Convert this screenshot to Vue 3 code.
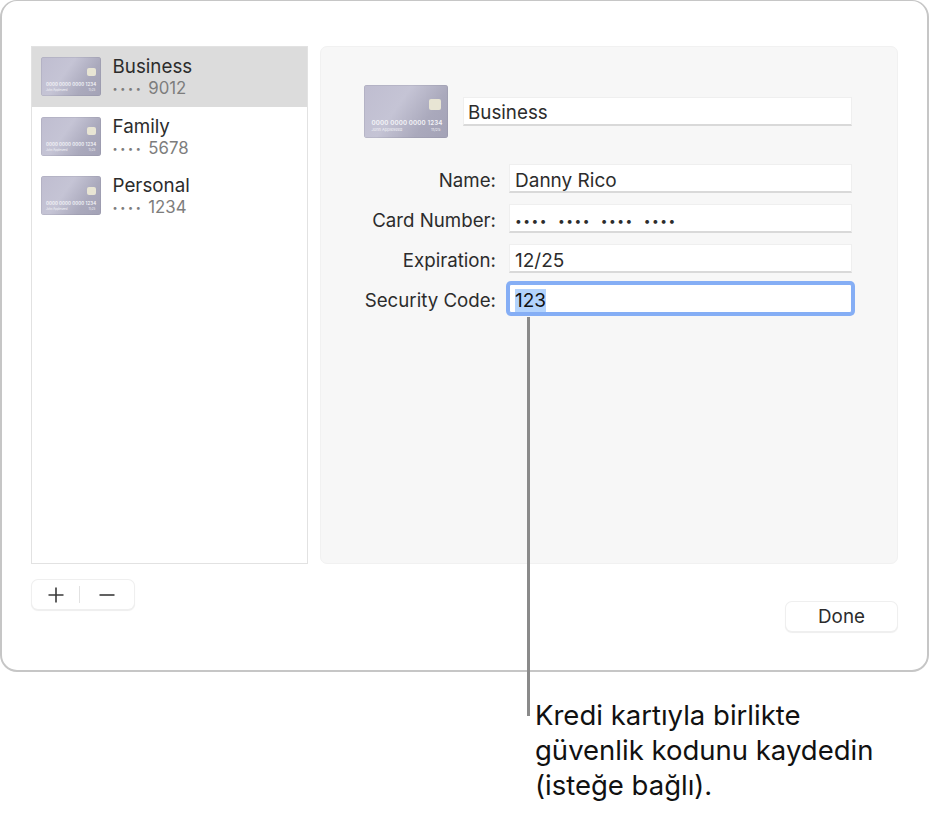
<script setup>
import { ref } from 'vue'

const cards = ref([
  { id: 'business', name: 'Business', last: '9012', selected: true },
  { id: 'family', name: 'Family', last: '5678', selected: false },
  { id: 'personal', name: 'Personal', last: '1234', selected: false },
])

const fields = ref([
  { label: 'Name:', value: 'Danny Rico' },
  { label: 'Card Number:', value: '•••• •••• •••• ••••', dots: true },
  { label: 'Expiration:', value: '12/25' },
  { label: 'Security Code:', value: '123', focused: true },
])
</script>

<template>
  <div class="page">
    <div class="window">
      <div class="panes">
        <ul class="card-list">
          <li
            v-for="card in cards"
            :key="card.id"
            class="card-row"
            :class="{ selected: card.selected }"
          >
            <div class="card-art small">
              <span class="chip"></span>
              <span class="art-number">0000 0000 0000 1234</span>
              <span class="art-meta"><span>John Appleseed</span><span>11/25</span></span>
            </div>
            <div class="card-text">
              <span class="card-name">{{ card.name }}</span>
              <span class="card-last"><span class="mini-dots">••••</span> {{ card.last }}</span>
            </div>
          </li>
        </ul>

        <div class="detail">
          <div class="title-row">
            <div class="card-art large">
              <span class="chip"></span>
              <span class="art-number">0000 0000 0000 1234</span>
              <span class="art-meta"><span>John Appleseed</span><span>11/25</span></span>
            </div>
            <div class="input title-input">Business</div>
          </div>

          <div class="form">
            <template v-for="field in fields" :key="field.label">
              <label class="field-label">{{ field.label }}</label>
              <div class="input form-input" :class="{ focused: field.focused, dots: field.dots }">
                <span :class="{ highlight: field.focused }">{{ field.value }}</span>
              </div>
            </template>
          </div>
        </div>
      </div>

      <div class="footer">
        <div class="add-remove">
          <button class="icon-btn add" aria-label="Add">
            <svg width="16" height="16" viewBox="0 0 16 16">
              <path d="M8 0.5V15.5M0.5 8H15.5" stroke="#3a3a3a" stroke-width="1.6" fill="none" />
            </svg>
          </button>
          <span class="divider"></span>
          <button class="icon-btn remove" aria-label="Remove">
            <svg width="16" height="16" viewBox="0 0 16 16">
              <path d="M0.5 8H15.5" stroke="#3a3a3a" stroke-width="1.6" fill="none" />
            </svg>
          </button>
        </div>
        <button class="done">Done</button>
      </div>
    </div>

    <div class="callout">Kredi kartıyla birlikte<br />güvenlik kodunu kaydedin<br />(isteğe bağlı).</div>
    <div class="leader"></div>
  </div>
</template>

<style>
html,
body {
  margin: 0;
  background: #fff;
}
</style>

<style scoped>
.page {
  position: relative;
  width: 931px;
  height: 814px;
  overflow: hidden;
  font-family: Inter, "Liberation Sans", sans-serif;
  background: #fff;
}

.window {
  box-sizing: border-box;
  width: 929px;
  height: 672px;
  padding: 45px 29px 0 29px;
  background: #fff;
  border: 2px solid #c6c6c6;
  border-top-width: 1px;
  border-radius: 17px;
}

.panes {
  display: flex;
  gap: 12px;
  height: 518px;
}

.card-list {
  box-sizing: border-box;
  width: 277px;
  margin: 0;
  padding: 0;
  list-style: none;
  border: 1.5px solid #e2e2e2;
}

.card-row {
  display: flex;
  align-items: center;
  gap: 12px;
  box-sizing: border-box;
  height: 59.5px;
  padding: 0 0 0 8.5px;
}

.card-row.selected {
  background: #dcdcdc;
}

.card-text {
  display: flex;
  flex-direction: column;
  padding-top: 2px;
}

.card-name {
  font-size: 18.8px;
  line-height: 22px;
  color: #2c2c2c;
}

.card-last {
  font-size: 16.8px;
  line-height: 20px;
  color: #7d7d7d;
}

.mini-dots {
  font-size: 9px;
  letter-spacing: 2.7px;
  vertical-align: 2px;
}

.card-art {
  position: relative;
  flex: none;
  box-sizing: border-box;
  overflow: hidden;
  color: #f4f4f8;
  background: linear-gradient(125deg, #bfbdd0 0%, #c5c4d5 40%, #aaa9bc 72%, #a3a2b6 100%);
  border-radius: 3px;
  box-shadow: inset 0 0 0 0.5px rgba(120, 120, 140, 0.35);
}

.card-art.small {
  width: 60px;
  height: 39px;
}

.card-art.large {
  width: 84px;
  height: 53px;
}

.chip {
  position: absolute;
  top: 27%;
  right: 8.3%;
  width: 14.6%;
  height: 20%;
  background: #e8e5d4;
  border-radius: 2px;
}

.art-number,
.art-meta {
  position: absolute;
  left: 9%;
  right: 9%;
  white-space: nowrap;
}

.art-number {
  top: 64%;
  font-weight: 600;
}

.art-meta {
  top: 79%;
  display: flex;
  justify-content: space-between;
}

.small .art-number {
  font-size: 4.4px;
  line-height: 6px;
  letter-spacing: 0.1px;
}

.small .art-meta {
  font-size: 2.8px;
  line-height: 4px;
}

.large .art-number {
  font-size: 6.2px;
  line-height: 8px;
  letter-spacing: 0.15px;
}

.large .art-meta {
  font-size: 4px;
  line-height: 5px;
}

.detail {
  box-sizing: border-box;
  width: 578px;
  padding: 38px 45px 0 43px;
  background: #f7f7f7;
  border: 1px solid #f1f1f1;
  border-radius: 7px;
}

.title-row {
  display: flex;
  align-items: center;
  gap: 15px;
}

.input {
  box-sizing: border-box;
  flex: 1;
  height: 29px;
  padding: 0 5px;
  font-size: 19px;
  line-height: 29px;
  color: #2c2c2c;
  background: #fff;
  border-top: 1px solid #efefef;
  border-bottom: 2px solid #d9d9d9;
  border-left: 1px solid #efefef;
  border-right: 1px solid #efefef;
}

.title-input {
  padding-left: 4px;
  font-size: 18.8px;
}

.form-input {
  line-height: 31px;
}

.form {
  display: grid;
  grid-template-columns: 132px 1fr;
  column-gap: 13px;
  row-gap: 11px;
  margin-top: 26px;
}

.field-label {
  height: 29px;
  font-size: 18.7px;
  line-height: 33px;
  color: #2c2c2c;
  text-align: right;
  white-space: nowrap;
}

.input.dots span {
  font-size: 12px;
  letter-spacing: 1.5px;
  word-spacing: 5px;
  vertical-align: 3px;
}

.input.focused {
  border: 1px solid #85aef5;
  border-radius: 2px;
  color: #111;
  box-shadow: 0 0 0 3px #85aef5;
}

.highlight {
  background: #b3d3fd;
}

.footer {
  display: flex;
  justify-content: space-between;
  align-items: flex-start;
  padding: 0 1px;
  margin-top: 16px;
}

.add-remove {
  display: flex;
  align-items: center;
  box-sizing: border-box;
  width: 102px;
  height: 29px;
  background: #fff;
  border-radius: 6px;
  box-shadow: 0 0 0 1px #efefef, 0 1px 1px 1px rgba(0, 0, 0, 0.07);
}

.icon-btn {
  display: flex;
  align-items: center;
  justify-content: center;
  height: 100%;
  padding: 0;
  background: none;
  border: 0;
}

.icon-btn.add {
  width: 47px;
}

.icon-btn.remove {
  flex: 1;
}

.divider {
  width: 1px;
  height: 17px;
  background: #e2e2e2;
}

.done {
  width: 111px;
  height: 29px;
  margin-top: 22px;
  padding: 0;
  font-family: inherit;
  font-size: 18.8px;
  color: #2c2c2c;
  background: #fff;
  border: 0;
  border-radius: 6px;
  box-shadow: 0 0 0 1px #efefef, 0 1px 1px 1px rgba(0, 0, 0, 0.07);
}

.callout {
  padding: 26px 0 0 535px;
  font-size: 27.5px;
  line-height: 35px;
  color: #111;
  white-space: nowrap;
}

/* leader line sits on top of the window */
.leader {
  position: absolute;
  left: 527px;
  top: 317px;
  width: 2.5px;
  height: 399px;
  background: #8a8a8a;
}
</style>
